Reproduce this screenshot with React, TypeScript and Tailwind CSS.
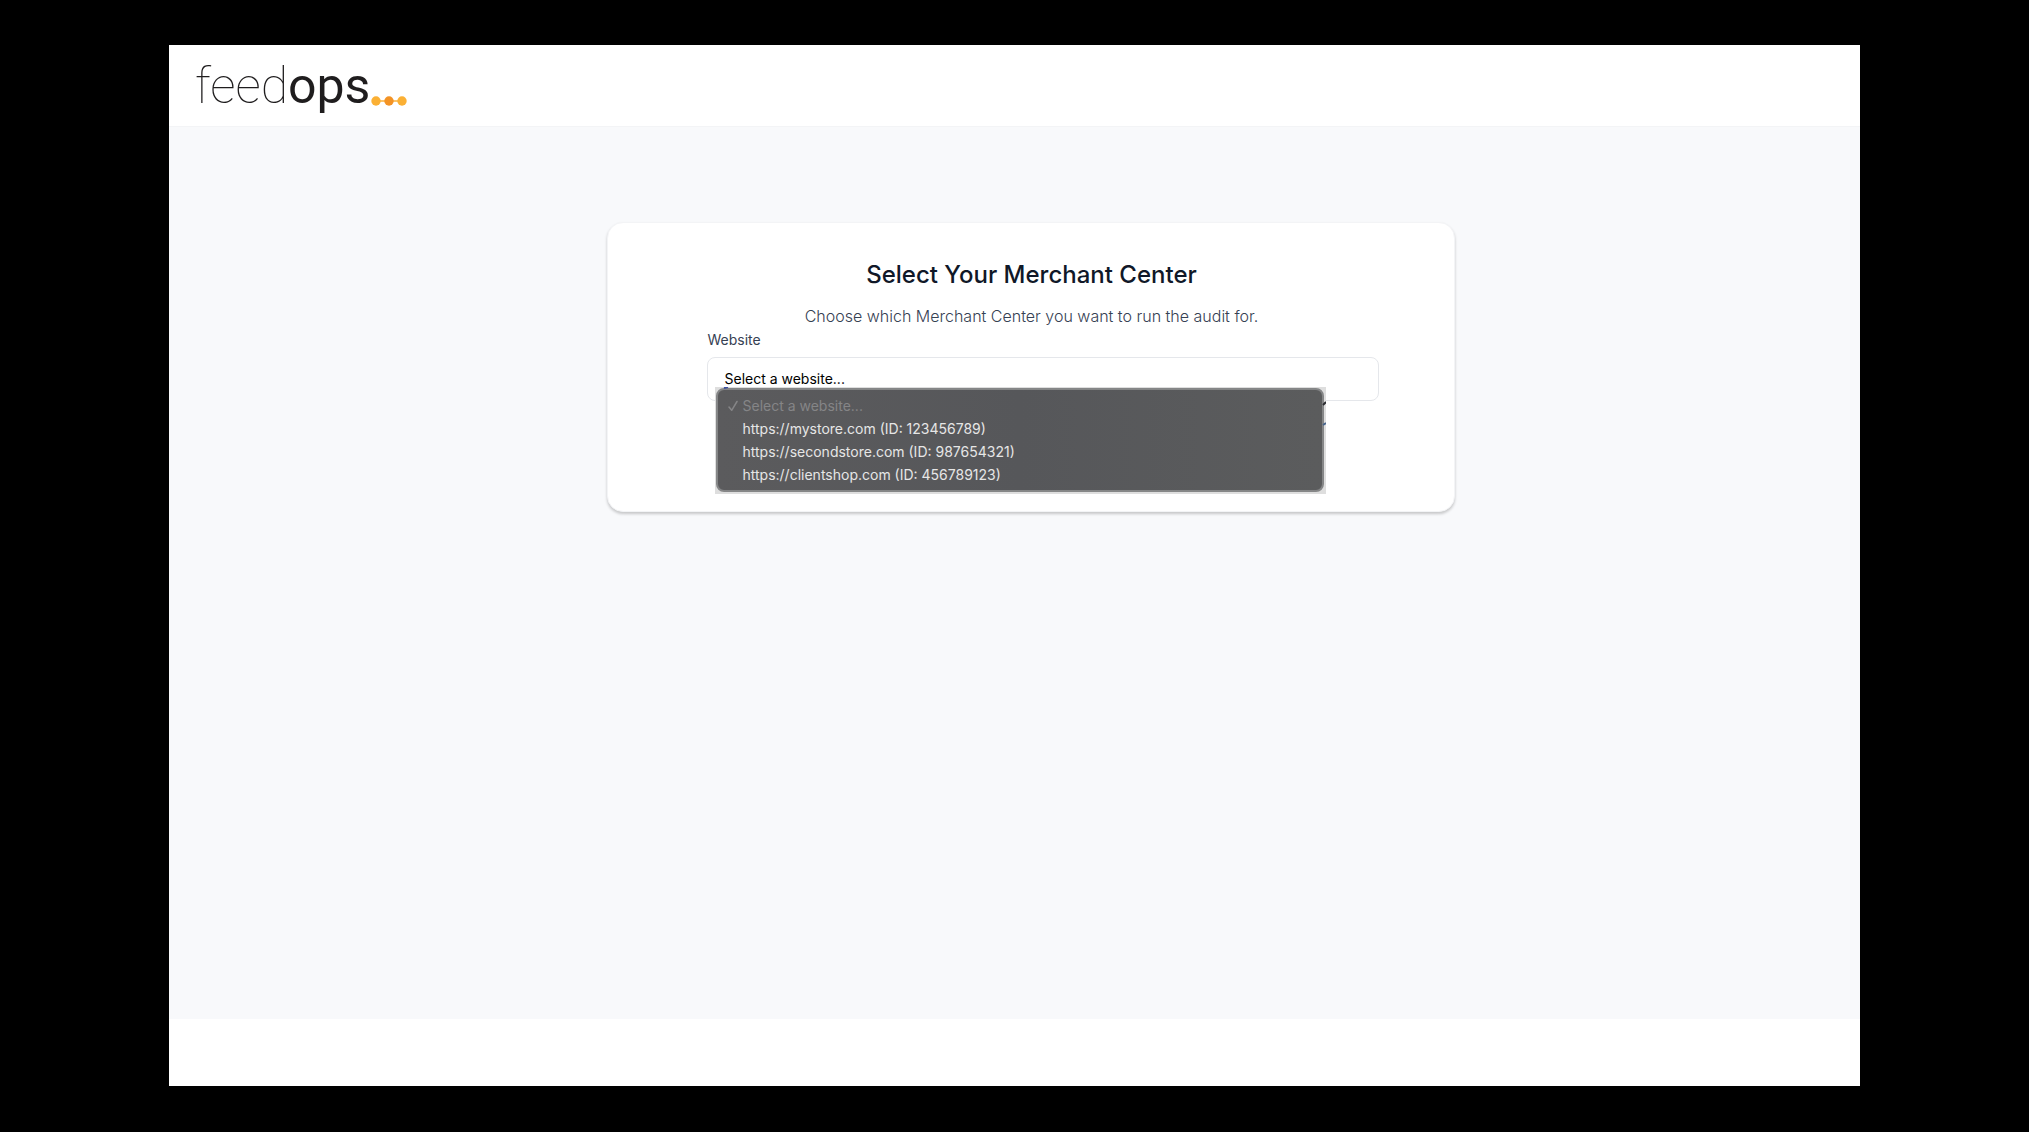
import { useState } from "react";

const websites = [
  { id: "123456789", url: "https://mystore.com" },
  { id: "987654321", url: "https://secondstore.com" },
  { id: "456789123", url: "https://clientshop.com" },
];

function Logo() {
  return (
    <a href="#" className="flex items-end text-[#1f1d1e]">
      <span className="font-['Roboto',sans-serif] text-[50px] leading-[60px] font-thin">
        feed<span className="font-normal">ops</span>
      </span>
      <svg viewBox="0 0 36 10" className="mb-[10px] ml-px h-[10px] w-9" aria-hidden="true">
        <path d="M5 5H31" stroke="#fbb034" strokeWidth="1.5" />
        <circle cx="5" cy="5" r="4.7" fill="#fbb034" />
        <circle cx="18" cy="5" r="4.7" fill="#f39325" />
        <circle cx="31" cy="5" r="4.7" fill="#fbb034" />
      </svg>
    </a>
  );
}

function Tick() {
  return (
    <svg viewBox="0 0 10 12" className="h-3 w-[10px]" fill="none" aria-hidden="true">
      <path
        d="M1 7L3.7 10.3L9 1.5"
        stroke="currentColor"
        strokeWidth="1.5"
        strokeLinecap="round"
        strokeLinejoin="round"
      />
    </svg>
  );
}

export default function App() {
  const [website, setWebsite] = useState("");
  const [open, setOpen] = useState(true);

  const pick = (id: string) => {
    setWebsite(id);
    setOpen(false);
  };

  return (
    <div className="flex min-h-screen flex-col bg-black pt-[45px] pb-[46px] font-['Inter',sans-serif]">
      <div className="mx-auto flex w-10/12 flex-1 flex-col bg-white">
        <header className="flex h-[82px] items-center border-b border-gray-100 px-[26px]">
          <Logo />
        </header>

        <main className="flex-1 bg-[#f8f9fb] pt-[95px] pl-[34px]">
          <div className="mx-auto w-full max-w-[848px] rounded-2xl border border-gray-100 bg-white pt-9 pr-[75px] pb-[110px] pl-[99px] shadow-[0_2px_3px_rgba(0,0,0,0.2)]">
            <div className="-ml-6 text-center">
              <h1 className="text-2xl leading-8 font-medium text-gray-900">Select Your Merchant Center</h1>
              <p className="mt-[13px] text-base leading-6 font-light text-gray-700">
                Choose which Merchant Center you want to run the audit for.
              </p>
            </div>

            <label htmlFor="website" className="block text-sm leading-6 text-gray-700">
              Website
            </label>
            <div className="relative mt-[5px]">
              <select
                id="website"
                value={website}
                onChange={(e) => pick(e.target.value)}
                className="block h-11 w-full appearance-none rounded-lg border border-gray-200 bg-white px-4 text-sm text-black outline-none"
              >
                <option value="">Select a website...</option>
                {websites.map((site) => (
                  <option key={site.id} value={site.id}>
                    {site.url} (ID: {site.id})
                  </option>
                ))}
              </select>

              {/* Open menu */}
              {open && (
                <div className="absolute top-[30px] left-2 w-[611px] bg-[#dedede] p-px pr-[2px] pb-[2px]">
                  <ul
                    role="listbox"
                    aria-label="Website"
                    className="rounded-lg border-2 border-[#858687] bg-linear-to-r from-[#5b5b5d] via-[#56575a] to-[#5b5c5d] py-[4px] pl-[10px] text-sm leading-[23px] text-[#e6e6e6]"
                  >
                    <li role="option" aria-selected="true" className="flex items-center gap-1 text-[#858587]">
                      <Tick />
                      Select a website...
                    </li>
                    {websites.map((site) => (
                      <li
                        key={site.id}
                        role="option"
                        aria-selected="false"
                        onClick={() => pick(site.id)}
                        className="cursor-default pl-[14px]"
                      >
                        {site.url} (ID: {site.id})
                      </li>
                    ))}
                  </ul>
                  {/* Slivers of the page showing round the menu's edge */}
                  <svg
                    viewBox="0 0 611 110"
                    className="pointer-events-none absolute top-0 left-0 h-[110px] w-[611px]"
                    fill="none"
                    strokeWidth="2"
                    aria-hidden="true"
                  >
                    <path d="M9 1L13 0" stroke="#3d4f9f" />
                    <path d="M608 18L611 15" stroke="#2b2c30" />
                    <path d="M608 38L611 36" stroke="#47658c" />
                  </svg>
                </div>
              )}
            </div>
          </div>
        </main>

        <footer className="h-[67px] bg-white" />
      </div>
    </div>
  );
}
